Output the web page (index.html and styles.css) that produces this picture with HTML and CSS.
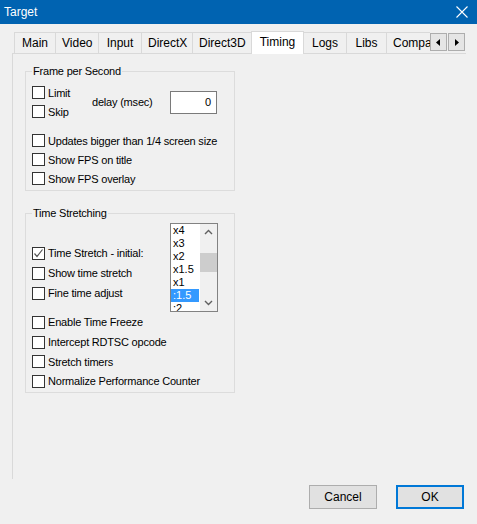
FILE: index.html
```html
<!DOCTYPE html>
<html lang="en">
<head>
  <meta charset="UTF-8">
  <title>Target</title>
  <link rel="stylesheet" href="styles.css">
</head>
<body>

<div class="titlebar">
  <span class="title">Target</span>
  <svg class="close" width="12" height="12" viewBox="0 0 12 12">
    <path d="M0.5 0.5 L11.5 11.5 M11.5 0.5 L0.5 11.5" stroke="#fff" stroke-width="1.1" fill="none"/>
  </svg>
</div>

<div class="tabbar">
  <div class="tablist">
    <div class="tab tab-main">Main</div>
    <div class="tab tab-video">Video</div>
    <div class="tab tab-input">Input</div>
    <div class="tab tab-dx">DirectX</div>
    <div class="tab tab-d3d">Direct3D</div>
    <div class="tab tab-timing active">Timing</div>
    <div class="tab tab-logs">Logs</div>
    <div class="tab tab-libs">Libs</div>
    <div class="tab tab-compat">Compatibility</div>
  </div>
  <div class="tab-scroll">
    <span class="scroll-btn">
      <svg width="5" height="7" viewBox="0 0 5 7"><polygon points="4,0 4,7 0,3.5" fill="#000"/></svg>
    </span>
    <span class="scroll-btn">
      <svg width="5" height="7" viewBox="0 0 5 7"><polygon points="1,0 1,7 5,3.5" fill="#000"/></svg>
    </span>
  </div>
</div>

<div class="panel">

  <fieldset class="group group-fps">
    <legend>Frame per Second</legend>
    <div class="fps-top">
      <div class="fps-col">
        <label class="check"><span class="box"></span>Limit</label>
        <label class="check"><span class="box"></span>Skip</label>
      </div>
      <span class="delay-label">delay (msec)</span>
      <div class="numbox">0</div>
    </div>
    <div class="fps-list">
      <label class="check"><span class="box"></span>Updates bigger than 1/4 screen size</label>
      <label class="check"><span class="box"></span>Show FPS on title</label>
      <label class="check"><span class="box"></span>Show FPS overlay</label>
    </div>
  </fieldset>

  <fieldset class="group group-time">
    <legend>Time Stretching</legend>
    <div class="time-top">
      <div class="time-col">
        <label class="check"><span class="box checked">
          <svg width="11" height="11" viewBox="0 0 11 11"><path d="M1.5 5.5 L4 8.5 L9.5 1.5" stroke="#555" stroke-width="1.2" fill="none"/></svg>
        </span>Time Stretch - initial:</label>
        <label class="check"><span class="box"></span>Show time stretch</label>
        <label class="check"><span class="box"></span>Fine time adjust</label>
      </div>
      <div class="listbox">
        <ul class="items">
          <li>x4</li>
          <li>x3</li>
          <li>x2</li>
          <li>x1.5</li>
          <li>x1</li>
          <li class="selected">:1.5</li>
          <li>:2</li>
        </ul>
        <div class="vscroll">
          <svg class="arrow" width="17" height="17" viewBox="0 0 17 17"><path d="M5 10 L8.5 6.5 L12 10" stroke="#606060" stroke-width="1.4" fill="none"/></svg>
          <div class="thumb"></div>
          <svg class="arrow down" width="17" height="17" viewBox="0 0 17 17"><path d="M5 7 L8.5 10.5 L12 7" stroke="#606060" stroke-width="1.4" fill="none"/></svg>
        </div>
      </div>
    </div>
    <div class="time-list">
      <label class="check"><span class="box"></span>Enable Time Freeze</label>
      <label class="check"><span class="box"></span>Intercept RDTSC opcode</label>
      <label class="check"><span class="box"></span>Stretch timers</label>
      <label class="check"><span class="box"></span>Normalize Performance Counter</label>
    </div>
  </fieldset>

</div>

<div class="buttons">
  <button class="btn">Cancel</button>
  <button class="btn default">OK</button>
</div>

</body>
</html>
```

FILE: styles.css
```css
body {
  margin: 0;
  width: 477px;
  height: 524px;
  overflow: hidden;
  background: #f0f0f0;
  font-family: "Liberation Sans", Arial, sans-serif;
  font-size: 11px;
  color: #000;
}

.titlebar {
  height: 24px;
  background: #0063b1;
  display: flex;
  align-items: center;
  justify-content: space-between;
  padding: 0 9px 0 4px;
}

.title {
  color: #fff;
  font-size: 12px;
}

/* tabs */
.tabbar {
  display: flex;
  margin: 7px 0 0 12px;
  height: 23px;
  width: 454px;
}

.tablist {
  flex: 0 0 418px;
  display: flex;
  align-items: flex-start;
  overflow: hidden;
  padding-left: 2px;
  box-sizing: border-box;
  position: relative;
  z-index: 1;
}

.tab {
  flex-shrink: 0;
  height: 21px;
  margin-top: 1px;
  margin-left: -1px;
  padding: 0 6px;
  border: 1px solid #d9d9d9;
  border-bottom: none;
  box-sizing: border-box;
  line-height: 20px;
  font-size: 12px;
  text-align: center;
  white-space: nowrap;
}

.tab:first-child {
  margin-left: 0;
}

.tab-main { width: 42px; }
.tab-video { width: 44px; }
.tab-input { width: 44px; }
.tab-dx { width: 52px; }
.tab-d3d { width: 60px; }
.tab-timing { width: 53px; }
.tab-logs { width: 44px; }
.tab-libs { width: 41px; }
.tab-compat { text-align: left; }

.tab.active {
  height: 23px;
  margin-top: 0;
  padding: 0;
  background: #fff;
  line-height: 21px;
}

.tab-scroll {
  display: flex;
  gap: 1px;
  margin-top: 2px;
}

.scroll-btn {
  width: 17px;
  height: 18px;
  box-sizing: border-box;
  border: 1px solid #adadad;
  background: #e5e5e5;
  display: flex;
  align-items: center;
  justify-content: center;
}

/* panel */
.panel {
  margin: -1px 0 0 12px;
  width: 454px;
  height: 426px;
  box-sizing: border-box;
  border-top: 1px solid #d9d9d9;
  border-left: 1px solid #d9d9d9;
  padding: 0 0 0 12px;
  letter-spacing: -0.2px;
}

.group {
  width: 210px;
  box-sizing: border-box;
  margin: 0;
  border: 1px solid #dcdcdc;
  padding: 0 0 0 6px;
}

.group legend {
  padding: 0 1px;
  line-height: 14px;
}

.group-fps {
  margin-top: 10px;
  padding-top: 5px;
  padding-bottom: 2px;
}

.group-time {
  margin-top: 15px;
  padding-top: 3px;
  padding-bottom: 1px;
}

.check {
  display: flex;
  align-items: center;
  gap: 3px;
  height: 19px;
  white-space: nowrap;
}

.group-time .check {
  height: 20px;
}

.time-list .check:nth-child(3) {
  height: 19px;
}

.box {
  width: 13px;
  height: 13px;
  box-sizing: border-box;
  border: 1px solid #333;
  background: #fff;
  flex-shrink: 0;
  display: flex;
}

.fps-top {
  display: flex;
  align-items: center;
}

.fps-col {
  width: 60px;
}

.delay-label {
  width: 78px;
}

.numbox {
  width: 47px;
  height: 23px;
  box-sizing: border-box;
  border: 1px solid #7a7a7a;
  background: #fff;
  text-align: right;
  padding-right: 5px;
  line-height: 21px;
}

.fps-list {
  margin-top: 10px;
}

/* time stretching */
.time-top {
  display: flex;
  align-items: flex-start;
}

.time-col {
  width: 138px;
  margin-top: 20px;
}

.listbox {
  width: 48px;
  height: 89px;
  box-sizing: border-box;
  border: 1px solid #828282;
  background: #fff;
  display: flex;
  overflow: hidden;
  letter-spacing: 0;
}

.items {
  flex: 1;
  list-style: none;
  margin: 0;
  padding: 0 1px 0 0;
}

.items li {
  height: 13px;
  line-height: 13px;
  padding-left: 2px;
}

.items li.selected {
  background: #3399ff;
  color: #fff;
}

.vscroll {
  width: 17px;
  background: #f0f0f0;
  display: flex;
  flex-direction: column;
}

.vscroll .arrow {
  display: block;
}

.thumb {
  height: 19px;
  margin-top: 12px;
  background: #cdcdcd;
}

.vscroll .down {
  margin-top: auto;
}

/* dialog buttons */
.buttons {
  display: flex;
  justify-content: flex-end;
  gap: 19px;
  margin-top: 6px;
  padding-right: 13px;
}

.btn {
  width: 68px;
  height: 24px;
  box-sizing: border-box;
  border: 1px solid #adadad;
  background: #e1e1e1;
  font-family: "Liberation Sans", Arial, sans-serif;
  font-size: 12px;
  color: #000;
  padding: 0;
}

.btn.default {
  border: 2px solid #0078d7;
}
```
